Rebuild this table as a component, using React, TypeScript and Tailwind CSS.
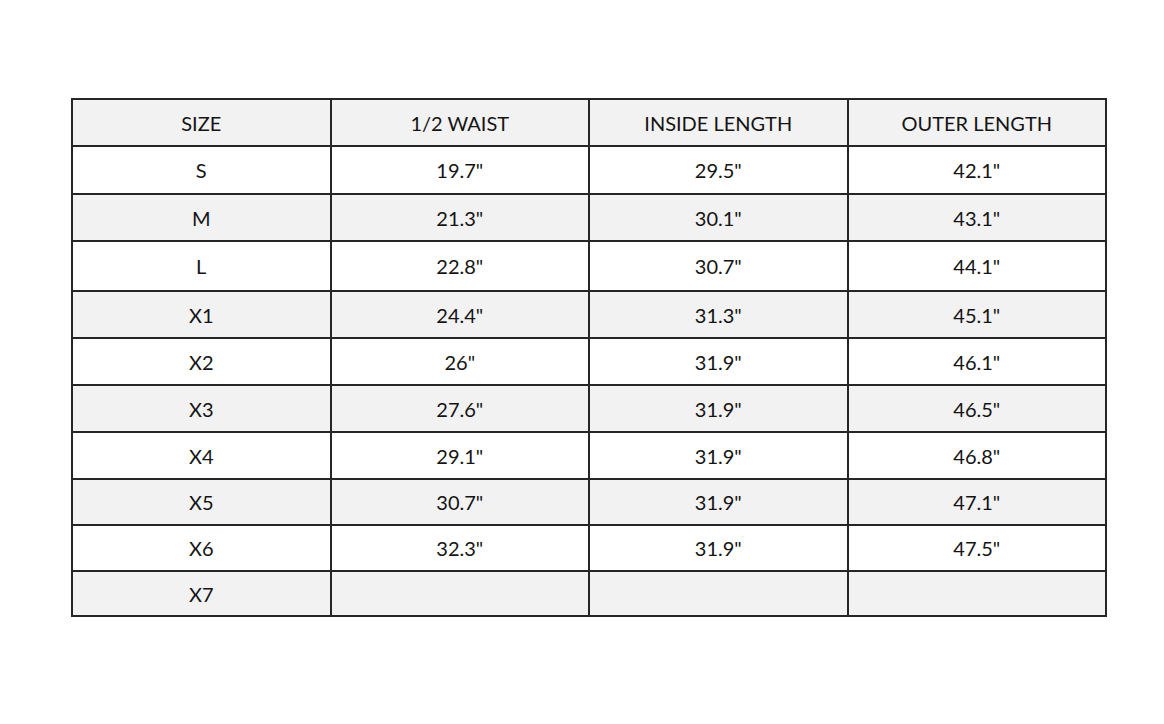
import React from "react";

const headers = ["SIZE", "1/2 WAIST", "INSIDE LENGTH", "OUTER LENGTH"];

// size, waist, inside, outer, row height
const rows: [string, string, string, string, string][] = [
  ["S", '19.7"', '29.5"', '42.1"', "h-[48px]"],
  ["M", '21.3"', '30.1"', '43.1"', "h-[47px]"],
  ["L", '22.8"', '30.7"', '44.1"', "h-[50px]"],
  ["X1", '24.4"', '31.3"', '45.1"', "h-[47px]"],
  ["X2", '26"', '31.9"', '46.1"', "h-[47px]"],
  ["X3", '27.6"', '31.9"', '46.5"', "h-[47px]"],
  ["X4", '29.1"', '31.9"', '46.8"', "h-[47px]"],
  ["X5", '30.7"', '31.9"', '47.1"', "h-[46px]"],
  ["X6", '32.3"', '31.9"', '47.5"', "h-[46px]"],
  ["X7", "", "", "", "h-[45px]"],
];

export default function App() {
  return (
    <div className="w-[1164px] h-[724px] bg-white pt-[98px] pl-[71px] font-['Lato','Liberation_Sans',sans-serif] text-[20px] text-[#141414]">
      <table className="w-[1036px] table-fixed border-collapse border-2 border-[#262626]">
        <thead>
          <tr className="h-[47px] bg-[#f2f2f2]">
            {headers.map((h) => (
              <th
                key={h}
                className="border-2 border-[#262626] font-normal text-center align-middle"
              >
                {h}
              </th>
            ))}
          </tr>
        </thead>
        <tbody>
          {rows.map((r, i) => (
            <tr key={r[0]} className={`${r[4]} ${i % 2 === 1 ? "bg-[#f2f2f2]" : "bg-white"}`}>
              {r.slice(0, 4).map((c, j) => (
                <td
                  key={j}
                  className="border-2 border-[#262626] text-center align-middle"
                >
                  {c}
                </td>
              ))}
            </tr>
          ))}
        </tbody>
      </table>
    </div>
  );
}
